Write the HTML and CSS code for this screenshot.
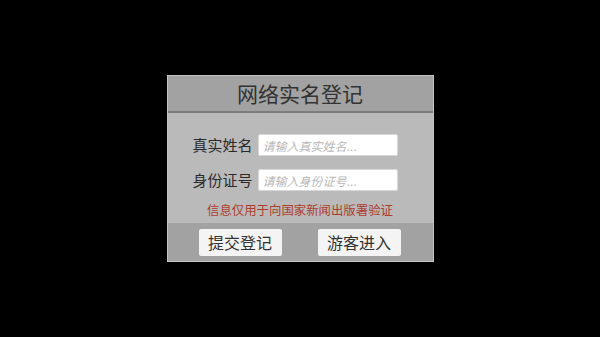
FILE: index.html
```html
<!DOCTYPE html>
<html lang="zh-CN">
<head>
  <meta charset="UTF-8" />
  <meta name="viewport" content="width=device-width, initial-scale=1.0"/>
  <title>网络实名登记</title>
  <link rel="stylesheet" href="styles.css">
</head>
<body>
  <!-- Dialog -->
  <div class="dialog">
    <div class="dialog-head">网络实名登记</div>
    <div class="dialog-body">
      <div class="row">
        <label class="label">真实姓名</label>
        <input class="field" type="text" placeholder="请输入真实姓名...">
      </div>
      <div class="row">
        <label class="label">身份证号</label>
        <input class="field" type="text" placeholder="请输入身份证号...">
      </div>
      <p class="notice">信息仅用于向国家新闻出版署验证</p>
    </div>
    <div class="dialog-foot">
      <button class="btn">提交登记</button>
      <button class="btn">游客进入</button>
    </div>
  </div>
</body>
</html>
```

FILE: styles.css
```css
* {
  margin: 0;
  padding: 0;
  box-sizing: border-box;
}

html, body {
  height: 100%;
  background: #000;
  font-family: 'Noto Sans CJK SC', 'Noto Sans', sans-serif;
}

body {
  display: flex;
  align-items: center;
  justify-content: center;
}

.dialog {
  width: 267px;
  height: 187px;
  border: 1px solid #c4c4c4;
  display: flex;
  flex-direction: column;
}

.dialog-head {
  height: 37px;
  background: #a2a2a2;
  border-bottom: 2px solid #7c7c7c;
  color: #333;
  font-size: 21px;
  line-height: 35px;
  text-align: center;
}

.dialog-body {
  height: 110px;
  background: #bababa;
  padding-top: 21px;
}

.row {
  display: flex;
  align-items: center;
  margin-left: 25px;
  margin-bottom: 13px;
}

.label {
  font-size: 15px;
  color: #2a2a2a;
  width: 65px;
  line-height: 22px;
}

.field {
  width: 140px;
  height: 22px;
  border: 1px solid #d8d8d8;
  border-radius: 2px;
  background: #fff;
  padding-left: 4px;
  font-family: inherit;
  font-size: 12px;
  outline: none;
}

.field::placeholder {
  color: #b8b8b8;
  font-style: italic;
}

.notice {
  text-align: center;
  color: #ad3d2f;
  font-size: 12.4px;
  margin-top: -3px;
}

.dialog-foot {
  flex: 1;
  background: #a2a2a2;
  display: flex;
  align-items: center;
  padding-left: 31px;
  gap: 36px;
}

.btn {
  width: 83px;
  height: 27px;
  border: none;
  border-radius: 2px;
  background: #f4f4f4;
  color: #333;
  font-family: inherit;
  font-size: 16px;
}
```
